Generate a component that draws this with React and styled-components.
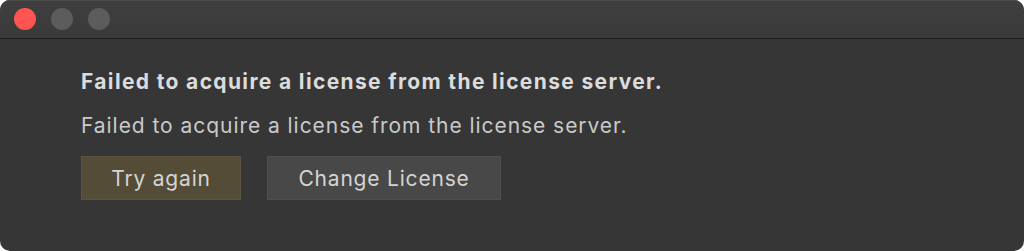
import React from "react";
import styled, { createGlobalStyle } from "styled-components";

const Global = createGlobalStyle`
  html, body { margin: 0; padding: 0; background: #ffffff; }
  body { font-family: Inter, "Noto Sans", sans-serif; -webkit-font-smoothing: antialiased; }
`;

const Window = styled.div`
  width: 1024px;
  height: 251px;
  border-radius: 10px;
  overflow: hidden;
  background: #363636;
  display: flex;
  flex-direction: column;
`;

const TitleBar = styled.div`
  height: 38px;
  flex: none;
  background: linear-gradient(#3f3f3f, #3a3a3a);
  box-shadow: inset 0 1px 0 #4a4a4a;
  border-bottom: 1px solid #1c1c1c;
  display: flex;
  align-items: center;
  gap: 15px;
  padding-left: 14px;
`;

const Light = styled.span`
  width: 22px;
  height: 22px;
  border-radius: 50%;
  background: ${(p) => p.$color};
`;

const Content = styled.div`
  padding: 31px 0 0 81px;
  display: flex;
  flex-direction: column;
`;

const Title = styled.div`
  font-size: 21px;
  font-weight: 700;
  letter-spacing: 1.35px;
  color: #dcdcdc;
  line-height: 24px;
`;

const Message = styled.div`
  margin-top: 20px;
  font-size: 21px;
  font-weight: 400;
  letter-spacing: 0.95px;
  color: #c9c9c9;
  line-height: 24px;
`;

const Buttons = styled.div`
  margin-top: 18px;
  display: flex;
  gap: 26px;
`;

const Button = styled.button`
  height: 44px;
  width: ${(p) => p.$w}px;
  box-sizing: border-box;
  border: 1px solid ${(p) => (p.$primary ? "#5c5440" : "#4f4f4f")};
  background: ${(p) => (p.$primary ? "#544c36" : "#484848")};
  color: #d4d4d4;
  font-family: Inter, "Noto Sans", sans-serif;
  font-size: 21px;
  letter-spacing: 0.8px;
  padding: 0;
  display: flex;
  align-items: center;
  justify-content: center;
`;

export default function App() {
  return (
    <>
      <Global />
      <Window>
        <TitleBar>
          <Light $color="#fe5553" />
          <Light $color="#5c5c5c" />
          <Light $color="#5c5c5c" />
        </TitleBar>
        <Content>
          <Title>Failed to acquire a license from the license server.</Title>
          <Message>Failed to acquire a license from the license server.</Message>
          <Buttons>
            <Button $primary $w={160}>Try again</Button>
            <Button $w={234}>Change License</Button>
          </Buttons>
        </Content>
      </Window>
    </>
  );
}
